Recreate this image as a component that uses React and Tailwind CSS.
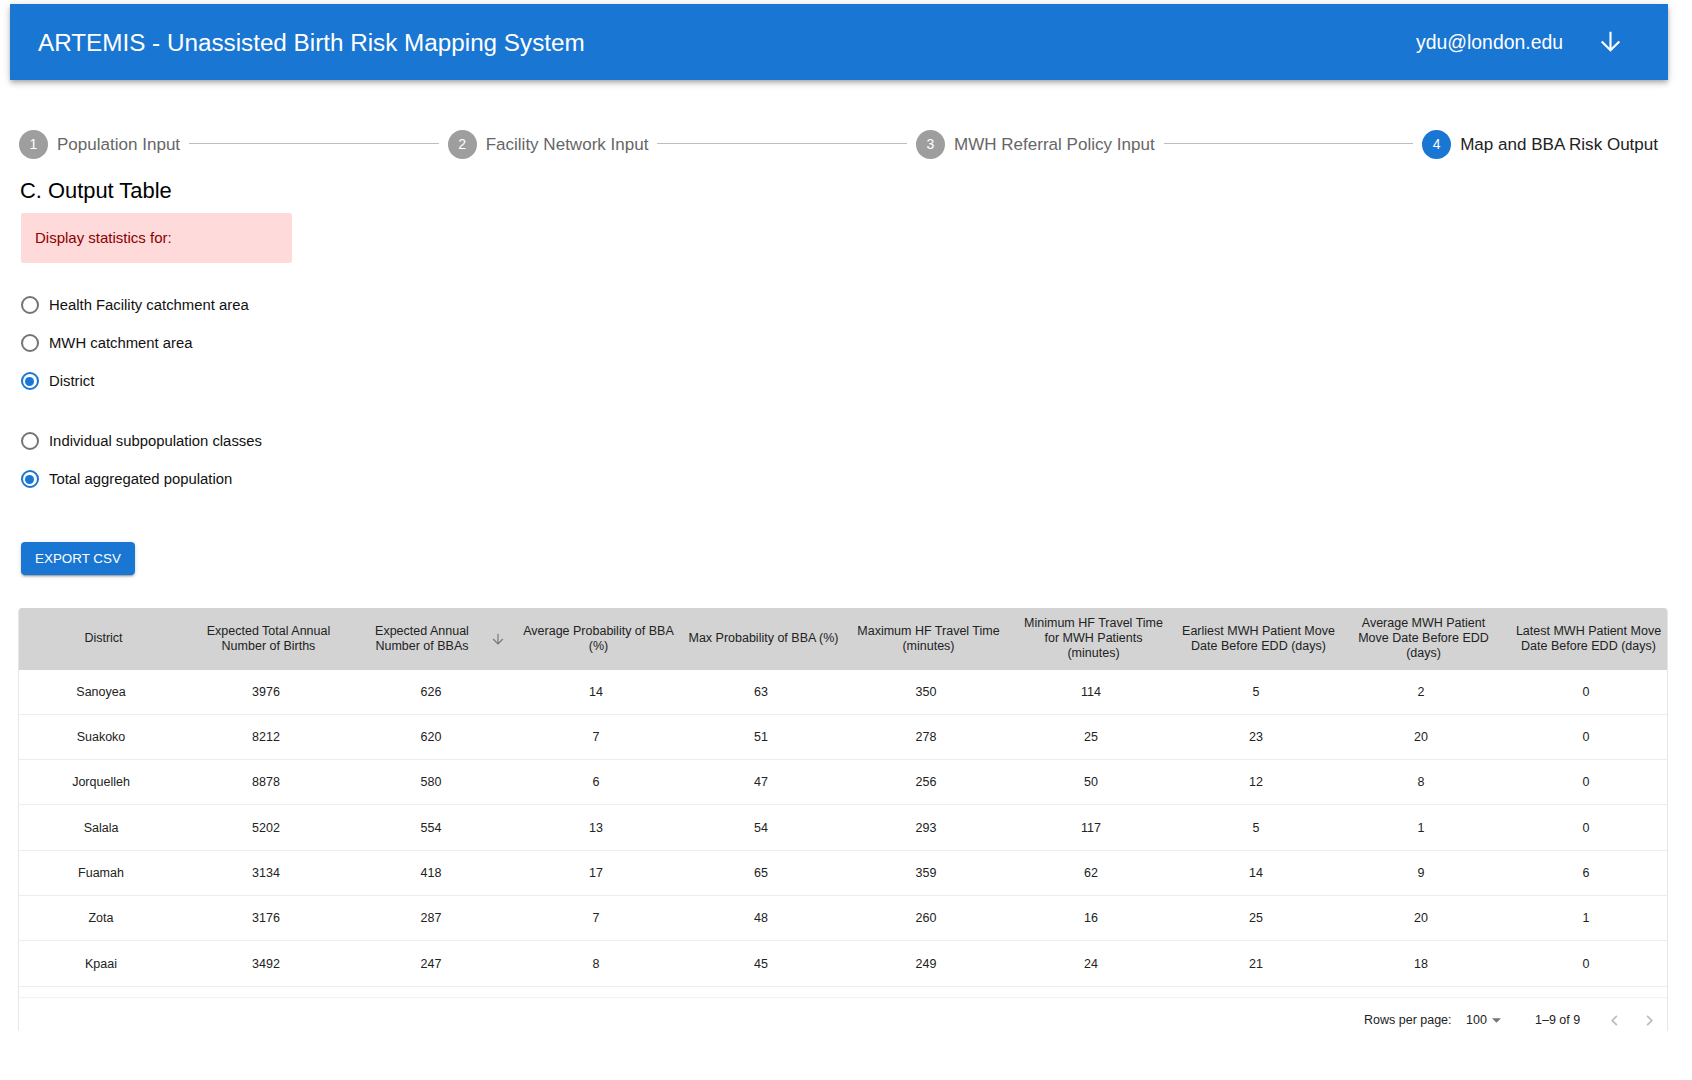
import React from 'react';

const columns = [
  'District',
  'Expected Total Annual\nNumber of Births',
  'Expected Annual\nNumber of BBAs',
  'Average Probability of BBA\n(%)',
  'Max Probability of BBA (%)',
  'Maximum HF Travel Time\n(minutes)',
  'Minimum HF Travel Time\nfor MWH Patients\n(minutes)',
  'Earliest MWH Patient Move\nDate Before EDD (days)',
  'Average MWH Patient\nMove Date Before EDD\n(days)',
  'Latest MWH Patient Move\nDate Before EDD (days)',
];

const rows = [
  ['Sanoyea', 3976, 626, 14, 63, 350, 114, 5, 2, 0],
  ['Suakoko', 8212, 620, 7, 51, 278, 25, 23, 20, 0],
  ['Jorquelleh', 8878, 580, 6, 47, 256, 50, 12, 8, 0],
  ['Salala', 5202, 554, 13, 54, 293, 117, 5, 1, 0],
  ['Fuamah', 3134, 418, 17, 65, 359, 62, 14, 9, 6],
  ['Zota', 3176, 287, 7, 48, 260, 16, 25, 20, 1],
  ['Kpaai', 3492, 247, 8, 45, 249, 24, 21, 18, 0],
];

const steps = ['Population Input', 'Facility Network Input', 'MWH Referral Policy Input', 'Map and BBA Risk Output'];

const ArrowDown = ({ className }) => (
  <svg viewBox="0 0 24 24" fill="none" stroke="currentColor" strokeWidth="1.75" className={className}>
    <path d="M12 4v15M4.7 12l7.3 7.3 7.3-7.3" />
  </svg>
);

const Radio = ({ label, checked }) => (
  <label className="flex items-center h-[38px] text-[14.85px] text-[#111]">
    <span
      className={`flex items-center justify-center w-[18px] h-[18px] ml-[2.5px] rounded-full border-2 ${
        checked ? 'border-[#1976d2]' : 'border-[#757575]'
      }`}
    >
      {checked && <span className="w-[9px] h-[9px] rounded-full bg-[#1976d2]" />}
    </span>
    <span className="ml-[10.5px]">{label}</span>
  </label>
);

export default function App() {
  return (
    <div className="h-[1080px] overflow-hidden bg-white pt-[4px] font-['Liberation_Sans',Arial,sans-serif]">
      {/* App bar */}
      <header className="flex items-center justify-between w-[1658px] h-[76px] ml-[10px] pl-[28px] pr-[43px] bg-[#1976d2] text-white shadow-[0_2px_4px_-1px_rgba(0,0,0,0.2),0_4px_5px_0_rgba(0,0,0,0.14),0_1px_10px_0_rgba(0,0,0,0.12)]">
        <h1 className="mt-[3px] text-[24.25px] font-normal">ARTEMIS - Unassisted Birth Risk Mapping System</h1>
        <div className="flex items-center gap-[33px]">
          <span className="mt-[2px] text-[19.4px]">ydu@london.edu</span>
          <ArrowDown className="w-[29px] h-[29px]" />
        </div>
      </header>

      {/* Stepper */}
      <div className="flex items-center w-[1639px] h-[29px] mt-[50px] ml-[19px]">
        {steps.map((step, i) => {
          const active = i === steps.length - 1;
          return (
            <React.Fragment key={step}>
              <div className="flex items-center">
                <span
                  className={`flex items-center justify-center w-[29px] h-[29px] rounded-full text-white text-[14px] ${
                    active ? 'bg-[#1976d2]' : 'bg-[#9e9e9e]'
                  }`}
                >
                  {i + 1}
                </span>
                <span className={`ml-[9px] text-[17.05px] ${active ? 'text-[#222]' : 'text-[#666]'}`}>{step}</span>
              </div>
              {!active && <div className="flex-1 h-[1px] mx-[9px] -mt-[2px] bg-[#bdbdbd]" />}
            </React.Fragment>
          );
        })}
      </div>

      <div className="ml-[18px]">
        <h2 className="h-[30px] mt-[17px] ml-[2px] text-[21.9px] leading-[30px] text-black">C. Output Table</h2>

        <div className="flex items-center w-[271px] h-[50px] mt-[7px] ml-[3px] pl-[14px] rounded-[2px] bg-[#ffdada] text-[15px] text-[#8b0000]">
          Display statistics for:
        </div>

        <div className="mt-[23px]">
          <Radio label="Health Facility catchment area" />
          <Radio label="MWH catchment area" />
          <Radio label="District" checked />
        </div>
        <div className="mt-[22px]">
          <Radio label="Individual subpopulation classes" />
          <Radio label="Total aggregated population" checked />
        </div>

        <button className="block w-[114px] h-[33px] mt-[44px] ml-[3px] pt-[2px] rounded-[4px] bg-[#1976d2] text-[13.4px] text-white shadow-[0_3px_1px_-2px_rgba(0,0,0,0.2),0_2px_2px_0_rgba(0,0,0,0.14),0_1px_5px_0_rgba(0,0,0,0.12)]">
          EXPORT CSV
        </button>

        {/* Output table */}
        <div className="w-[1650px] h-[423px] mt-[33px] overflow-hidden rounded-t-[4px] border-x border-[#e6e6e6] text-[12.5px] text-[#222]">
          <div className="grid grid-cols-10 h-[61.5px] -mx-[1px] bg-[#d3d3d3] leading-[15px]">
            {columns.map((col, i) => (
              <div
                key={col}
                className={`flex items-center justify-center text-center ${i === 2 ? 'pl-[20px]' : 'pl-[6px]'}`}
              >
                <span className="whitespace-pre">{col}</span>
                {i === 2 && <ArrowDown className="w-[16px] h-[16px] ml-[21px] text-[#777]" />}
              </div>
            ))}
          </div>
          {rows.map((row) => (
            <div key={row[0]} className="grid grid-cols-10 h-[45.33px] -mx-[1px] pt-[1px] border-b border-[#ededed]">
              {row.map((cell, j) => (
                <div key={j} className="flex items-center justify-center pl-[1px]">
                  {cell}
                </div>
              ))}
            </div>
          ))}
          <div className="h-[11px] border-b border-[#f2f2f2]" />
          <div className="flex items-center h-[45px] pl-[1345px]">
            <span className="w-[102px]">Rows per page:</span>
            <span className="w-[26px]">100</span>
            <svg viewBox="0 0 10 5" fill="#757575" className="w-[9px] h-[5px]">
              <path d="M0 0l5 5 5-5z" />
            </svg>
            <span className="ml-[34px]">1–9 of 9</span>
            <svg viewBox="0 0 24 24" fill="#bdbdbd" className="w-[21px] h-[21px] ml-[24px]">
              <path d="M15.41 7.41L14 6l-6 6 6 6 1.41-1.41L10.83 12z" />
            </svg>
            <svg viewBox="0 0 24 24" fill="#bdbdbd" className="w-[21px] h-[21px] ml-[14px]">
              <path d="M10 6L8.59 7.41 13.17 12l-4.58 4.59L10 18l6-6z" />
            </svg>
          </div>
        </div>
      </div>
    </div>
  );
}
